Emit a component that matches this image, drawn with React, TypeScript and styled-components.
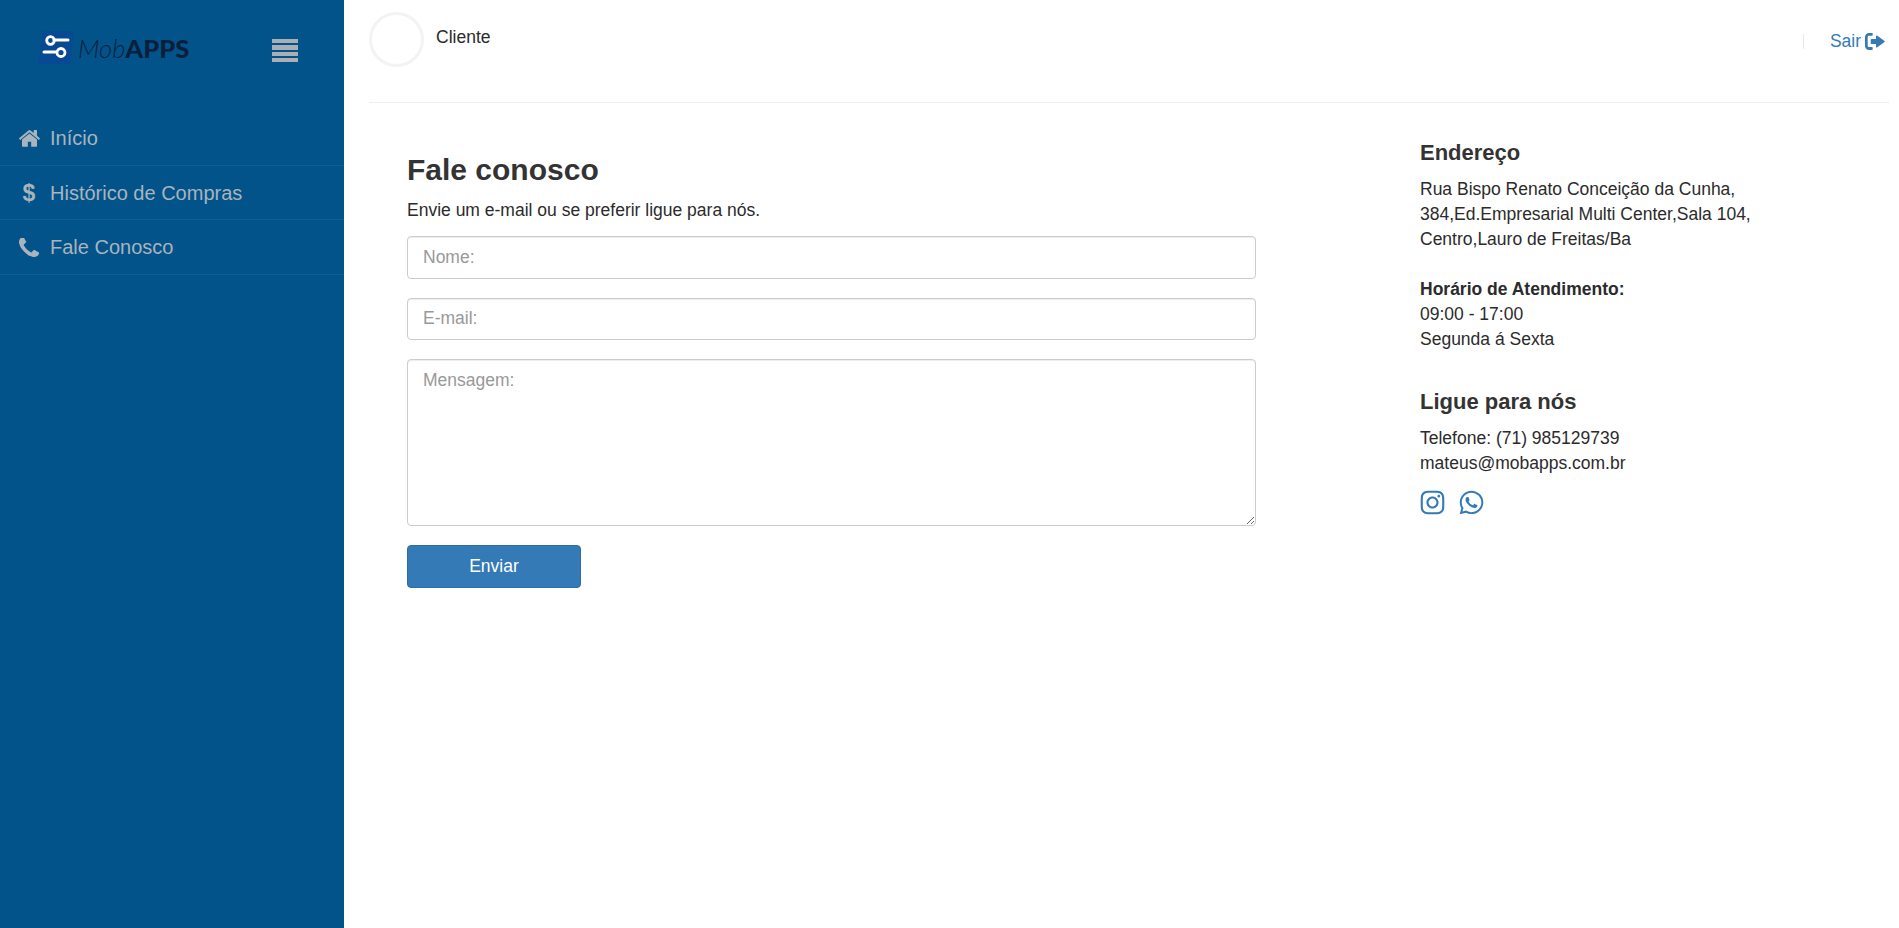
import React from "react";
import styled, { createGlobalStyle } from "styled-components";
import { FaInstagram, FaWhatsapp } from "react-icons/fa";

const Global = createGlobalStyle`
  html, body { margin: 0; padding: 0; height: 100%; background: #fff; }
  body { font-family: "Liberation Sans", Arial, sans-serif; font-size: 17.5px; line-height: 25px; color: #2b2b2b; }
  * { box-sizing: border-box; }
`;

const Page = styled.div`
  display: flex;
  height: 928px;
  overflow: hidden;
`;
const Sidebar = styled.aside`
  width: 344px;
  flex: none;
  background: #02538a;
`;
const Brand = styled.div`
  height: 111px;
  padding: 31px 46px 0 38px;
  display: flex;
  align-items: flex-start;
  justify-content: space-between;
`;
const Logo = styled.div`
  display: flex;
  align-items: center;
  height: 34px;
  gap: 4px;
`;
const LogoText = styled.span`
  font-family: Lato, "Liberation Sans", sans-serif;
  font-size: 25.5px;
  line-height: 34px;
  color: #0a1f3c;
  font-style: italic;
  font-weight: 300;
  b { font-style: normal; font-weight: 900; }
`;
const Burger = styled.div`
  width: 26px;
  margin-top: 8px;
  display: flex;
  flex-direction: column;
  gap: 2px;
  span { display: block; height: 4.25px; background: #a9afb5; }
`;
const Nav = styled.nav`
  display: flex;
  flex-direction: column;
`;
const NavItem = styled.a`
  display: flex;
  align-items: center;
  height: 54.5px;
  padding: 2px 0 0 17px;
  border-bottom: 1px solid #0e5f92;
  font-size: 20px;
  color: #a9b4bd;
`;
const NavIcon = styled.span`
  width: 24px;
  height: 24px;
  flex: none;
  margin-right: 9px;
  display: flex;
  align-items: center;
  justify-content: center;
  font-weight: 700;
  font-size: 23px;
  svg { fill: currentColor; display: block; }
`;
const Main = styled.main`
  flex: 1;
  padding: 0 10px 0 25px;
  min-width: 0;
`;
const TopBar = styled.header`
  height: 103px;
  display: flex;
  justify-content: space-between;
  border-bottom: 1px solid #eeeeee;
`;
const User = styled.div`
  display: flex;
  gap: 12px;
  padding-top: 12px;
`;
const Avatar = styled.div`
  width: 55px;
  height: 55px;
  border-radius: 50%;
  border: 3px solid #f3f3f3;
`;
const UserName = styled.span`
  margin-top: 13px;
`;
const Exit = styled.div`
  display: flex;
  align-items: center;
  height: 15px;
  margin: 34px 4px 0 0;
  padding-left: 26px;
  border-left: 1px solid #e8e8e8;
  gap: 4px;
  color: #337ab7;
`;
const Content = styled.div`
  display: grid;
  grid-template-columns: 849px 1fr;
  column-gap: 164px;
  padding-left: 38px;
`;
const Heading = styled.h1`
  margin: 50px 0 0;
  font-size: 30px;
  line-height: 33px;
  font-weight: 700;
  color: #333;
`;
const Lead = styled.p`
  margin: 12px 0 13.4px;
`;
const Form = styled.form`
  display: flex;
  flex-direction: column;
  align-items: flex-start;
  gap: 18.75px;
`;
const Input = styled.input`
  width: 100%;
  height: 42.5px;
  padding: 0 15px;
  border: 1px solid #cccccc;
  border-radius: 4px;
  font: inherit;
  box-shadow: inset 0 1px 1px rgba(0,0,0,.075);
  &::placeholder { color: #999; opacity: 1; }
`;
const Area = styled.textarea`
  width: 100%;
  height: 167.5px;
  padding: 8px 15px;
  border: 1px solid #cccccc;
  border-radius: 4px;
  font: inherit;
  box-shadow: inset 0 1px 1px rgba(0,0,0,.075);
  &::placeholder { color: #999; opacity: 1; }
`;
const Send = styled.button`
  width: 174px;
  height: 43px;
  background: #337ab7;
  border: 1px solid #2e6da4;
  border-radius: 4px;
  color: #fff;
  font: inherit;
`;
const Aside = styled.section`
  padding-top: 36px;
`;
const SubHeading = styled.h3`
  margin: 0 0 11px;
  font-size: 22px;
  line-height: 27px;
  font-weight: 700;
  color: #333;
`;
const Info = styled.p`
  margin: 0 0 25px;
  & + & { margin-bottom: 36px; }
  &:last-of-type { margin-bottom: 13px; }
`;
const Socials = styled.div`
  display: flex;
  gap: 12px;
  margin-left: -1px;
  color: #337ab7;
  svg { width: 27px; height: 27px; display: block; }
`;

function LogoMark() {
  return (
    <svg width="36" height="34" viewBox="0 0 36 34">
      <path d="M5 0h31l-4 33H0z" fill="#074a93" />
      <circle cx="12.500" cy="9.500" r="3.800" fill="none" stroke="#fff" strokeWidth="2.800" />
      <path d="M16 9h14M6 21h12" stroke="#fff" strokeWidth="3" strokeLinecap="round" />
      <circle cx="23" cy="21.500" r="4" fill="none" stroke="#fff" strokeWidth="2.800" />
    </svg>
  );
}

function ExitIcon() {
  return (
    <svg width="20" height="17" viewBox="0 0 20 17" fill="#337ab7">
      <path d="M7 0H4C1.800 0 0 1.800 0 4v9c0 2.200 1.800 4 4 4h3c.5 0 .7-.3.7-.7v-1.600c0-.5-.3-.7-.7-.7H4c-.8 0-1.300-.6-1.300-1.300V4c0-.8.5-1.300 1.300-1.300h3c.5 0 .7-.3.7-.7V.8C7.700.3 7.500 0 7 0z" />
      <path d="M12 2.600c-.4-.4-1-.1-1 .4V6H6.500c-.5 0-.8.300-.8.800v3.400c0 .5.300.8.800.8H11v3c0 .5.600.8 1 .4l7.500-5.500c.3-.3.3-.7 0-1z" />
    </svg>
  );
}

function HomeIcon() {
  return (
    <svg width="21" height="19" viewBox="90 250 1612 1300">
      <path d="M1472 992v480q0 26-19 45t-45 19h-384v-384h-256v384h-384q-26 0-45-19t-19-45v-480q0-1 .5-3t.5-3l575-474 575 474q1 2 1 6zm223-69l-62 74q-8 9-21 11h-3q-13 0-21-7l-692-577-692 577q-12 8-24 7-13-2-21-11l-62-74q-8-10-7-23.5t11-21.5l719-599q32-26 76-26t76 26l244 204v-195q0-14 9-23t23-9h192q14 0 23 9t9 23v408l219 182q10 8 11 21.5t-7 23.5z" />
    </svg>
  );
}

function PhoneIcon() {
  return (
    <svg width="20" height="20" viewBox="192 192 1408 1408">
      <path d="M1600 1240q0 27-10 70.5t-21 68.5q-21 50-122 106-94 51-186 51-27 0-53-3.5t-57.5-12.5-47-14.5-55.5-20.5-49-18q-98-35-175-83-127-79-264-216t-216-264q-48-77-83-175-3-9-18-49t-20.5-55.5-14.5-47-12.5-57.5-3.5-53q0-92 51-186 56-101 106-122 25-11 68.5-21t70.5-10q14 0 21 3 18 6 53 76 11 19 30 54t35 63.5 31 53.5q3 4 17.5 25t21.5 35.5 7 28.5q0 20-28.5 50t-62 55-62 53-28.5 46q0 9 5 22.5t8.5 20.5 14 24 11.5 19q76 137 174 235t235 174q2 1 19 11.5t24 14 20.5 8.5 22.5 5q18 0 46-28.5t53-62 55-62 50-28.5q14 0 28.5 7t35.5 21.5 25 17.5q25 15 53.5 31t63.5 35 54 30q70 35 76 53 3 7 3 21z" />
    </svg>
  );
}

export default function App() {
  return (
    <Page>
      <Global />
      <Sidebar>
        <Brand>
          <Logo>
            <LogoMark />
            <LogoText>Mob<b>APPS</b></LogoText>
          </Logo>
          <Burger><span /><span /><span /><span /></Burger>
        </Brand>
        <Nav>
          <NavItem><NavIcon><HomeIcon /></NavIcon>Início</NavItem>
          <NavItem><NavIcon>$</NavIcon>Histórico de Compras</NavItem>
          <NavItem><NavIcon><PhoneIcon /></NavIcon>Fale Conosco</NavItem>
        </Nav>
      </Sidebar>
      <Main>
        <TopBar>
          <User>
            <Avatar />
            <UserName>Cliente</UserName>
          </User>
          <Exit>Sair <ExitIcon /></Exit>
        </TopBar>
        <Content>
          <div>
            <Heading>Fale conosco</Heading>
            <Lead>Envie um e-mail ou se preferir ligue para nós.</Lead>
            <Form>
              <Input placeholder="Nome:" />
              <Input placeholder="E-mail:" />
              <Area placeholder="Mensagem:" />
              <Send type="button">Enviar</Send>
            </Form>
          </div>
          <Aside>
            <SubHeading>Endereço</SubHeading>
            <Info>
              Rua Bispo Renato Conceição da Cunha,<br />
              384,Ed.Empresarial Multi Center,Sala 104,<br />
              Centro,Lauro de Freitas/Ba
            </Info>
            <Info>
              <strong>Horário de Atendimento:</strong><br />
              09:00 - 17:00<br />
              Segunda á Sexta
            </Info>
            <SubHeading>Ligue para nós</SubHeading>
            <Info>
              Telefone: (71) 985129739<br />
              mateus@mobapps.com.br
            </Info>
            <Socials><FaInstagram /><FaWhatsapp /></Socials>
          </Aside>
        </Content>
      </Main>
    </Page>
  );
}
